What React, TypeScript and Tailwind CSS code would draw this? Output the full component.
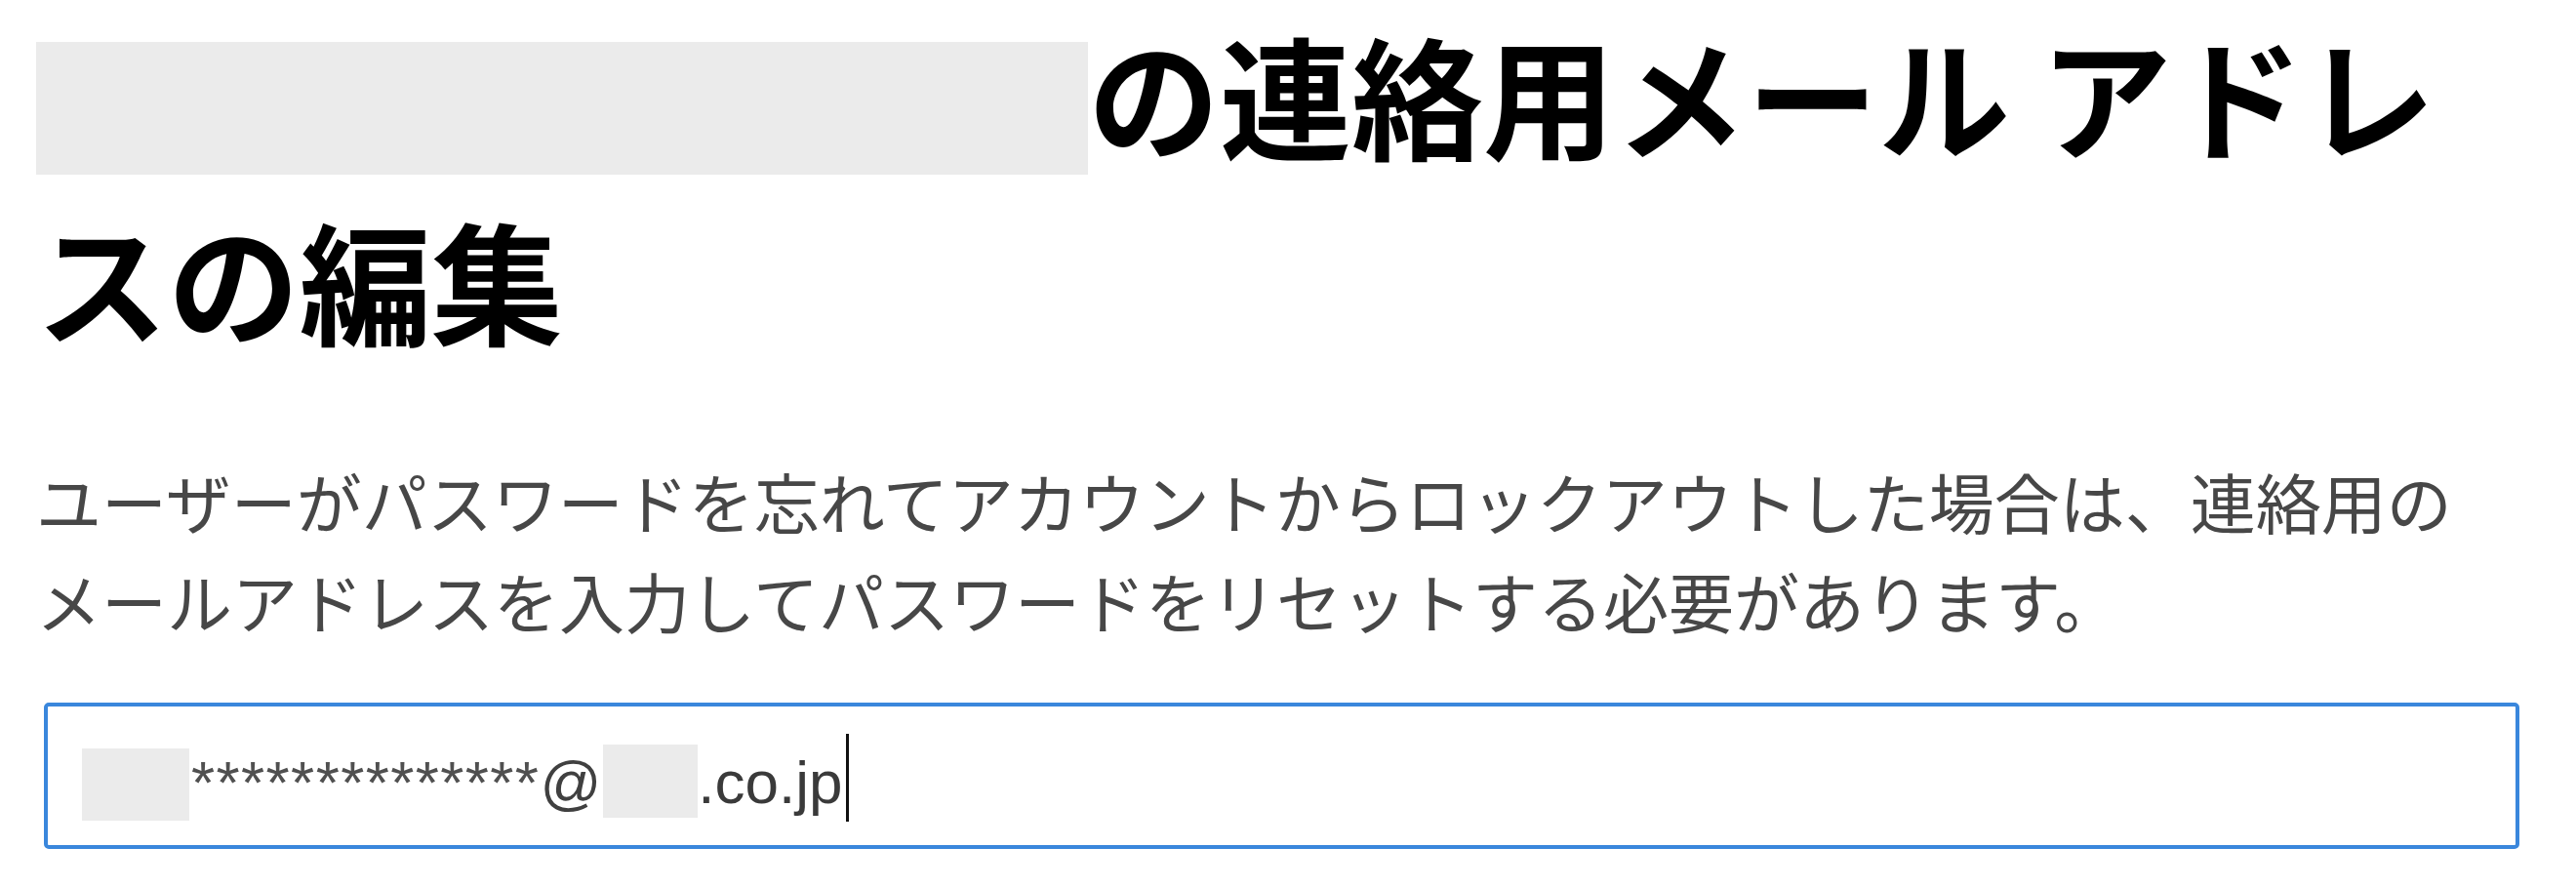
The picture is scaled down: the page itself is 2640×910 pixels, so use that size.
import React from 'react'

// Masked placeholder block used where account details are hidden
const Masked = ({ className }: { className: string }) => (
  <span className={`block shrink-0 bg-[#ebebeb] ${className}`} />
)

export default function App() {
  const jp = { fontFamily: '"Noto Sans CJK JP", "Noto Sans", sans-serif' }
  const latin = { fontFamily: '"Liberation Sans", Arial, sans-serif' }

  return (
    <div className="w-[2640px] min-h-[910px] bg-white pl-[37px] pr-[58px]" style={jp}>
      {/* Heading */}
      <h1 className="text-[135px] leading-[190px] font-bold text-black">
        <span className="inline-block align-top mt-[43px] w-[1078px] h-[136px] bg-[#ebebeb]" />
        <span>の連絡用メール アドレスの編集</span>
      </h1>

      {/* Description */}
      <p className="mt-[82px] text-[67px] leading-[102px] text-[#474747]">
        ユーザーがパスワードを忘れてアカウントからロックアウトした場合は、連絡用の
        <br />
        メールアドレスを入力してパスワードをリセットする必要があります。
      </p>

      {/* Email field (focused) */}
      <div className="mt-[54px] ml-[8px] h-[150px] rounded-[5px] border-[4px] border-[#3a87dc] bg-white pl-[35px]">
        <div className="flex items-start h-full" style={latin}>
          <Masked className="mt-[43px] w-[110px] h-[74px]" />
          <span className="mt-[47px] ml-[2px] text-[62px] leading-[62px] tracking-[1.4px] text-[#505050]">
            **************
          </span>
          <span className="mt-[47px] text-[62px] leading-[62px] text-[#404040]">@</span>
          <Masked className="mt-[39px] ml-[2px] w-[97px] h-[75px]" />
          <span className="mt-[47px] text-[62px] leading-[62px] text-[#3a3a3a]">.co.jp</span>
          <span className="block mt-[28px] ml-[3px] w-[3px] h-[90px] bg-[#111]" />
        </div>
      </div>
    </div>
  )
}
